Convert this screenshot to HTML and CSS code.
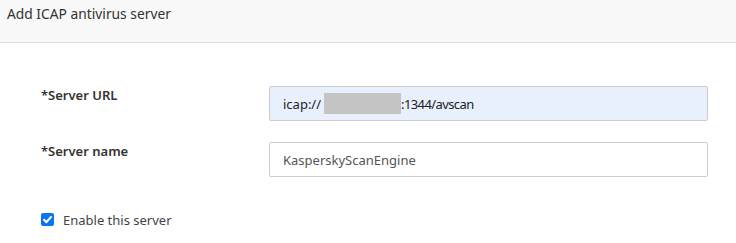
FILE: index.html
```html
<!DOCTYPE html>
<html>
<head>
<meta charset="utf-8">
<link rel="stylesheet" href="styles.css">
</head>
<body>
<div class="header">Add ICAP antivirus server</div>
<div class="form">
  <div class="row">
    <div class="label">*Server URL</div>
    <div class="field">
      <div class="input autofill">icap://<span class="mask"></span><span class="tail">:1344/avscan</span></div>
    </div>
  </div>
  <div class="row">
    <div class="label">*Server name</div>
    <div class="field">
      <div class="input">KasperskyScanEngine</div>
    </div>
  </div>
  <label class="check">
    <span class="box"><svg width="13" height="13" viewBox="0 0 13 13"><path d="M3 6.8 L5.4 9.2 L10 4" fill="none" stroke="#fff" stroke-width="2" stroke-linecap="round" stroke-linejoin="round"/></svg></span>
    <span class="check-text">Enable this server</span>
  </label>
</div>
</body>
</html>
```
FILE: styles.css
```css
html, body {
  margin: 0;
  padding: 0;
  background: #fff;
}
body {
  font-family: "Noto Sans", "Open Sans", sans-serif;
  color: #333;
  width: 736px;
  height: 243px;
  overflow: hidden;
}
.header {
  box-sizing: border-box;
  height: 43px;
  background: #f8f8f8;
  border-bottom: 1px solid #dedede;
  padding: 4px 0 0 7px;
  font-size: 13.8px;
  line-height: 20px;
  color: #333;
}
.form {
  padding: 43px 0 0 41px;
}
.row {
  display: flex;
  align-items: flex-start;
  margin-bottom: 21px;
}
.label {
  width: 228px;
  font-size: 13px;
  font-weight: 600;
  line-height: 18px;
  color: #333;
}
.field {
  width: 439px;
}
.input {
  box-sizing: border-box;
  height: 35px;
  border: 1px solid #ccc;
  border-radius: 2px;
  padding: 0 0 0 13px;
  display: flex;
  align-items: center;
  font-size: 13px;
  color: #555;
  background: #fff;
}
.input.autofill {
  background: #e8f0fe;
  color: #222;
}
.mask {
  display: inline-block;
  width: 77px;
  height: 21px;
  background: #c4c4c4;
  margin-left: 3px;
}
.tail {
  letter-spacing: -0.6px;
}
.check {
  display: flex;
  align-items: center;
  margin-top: 36px;
  height: 13px;
}
.box {
  width: 13px;
  height: 13px;
  border-radius: 2px;
  background: #0b75f0;
  display: block;
}
.box svg {
  display: block;
}
.check-text {
  margin-left: 9px;
  font-size: 13px;
  color: #444;
}
```
